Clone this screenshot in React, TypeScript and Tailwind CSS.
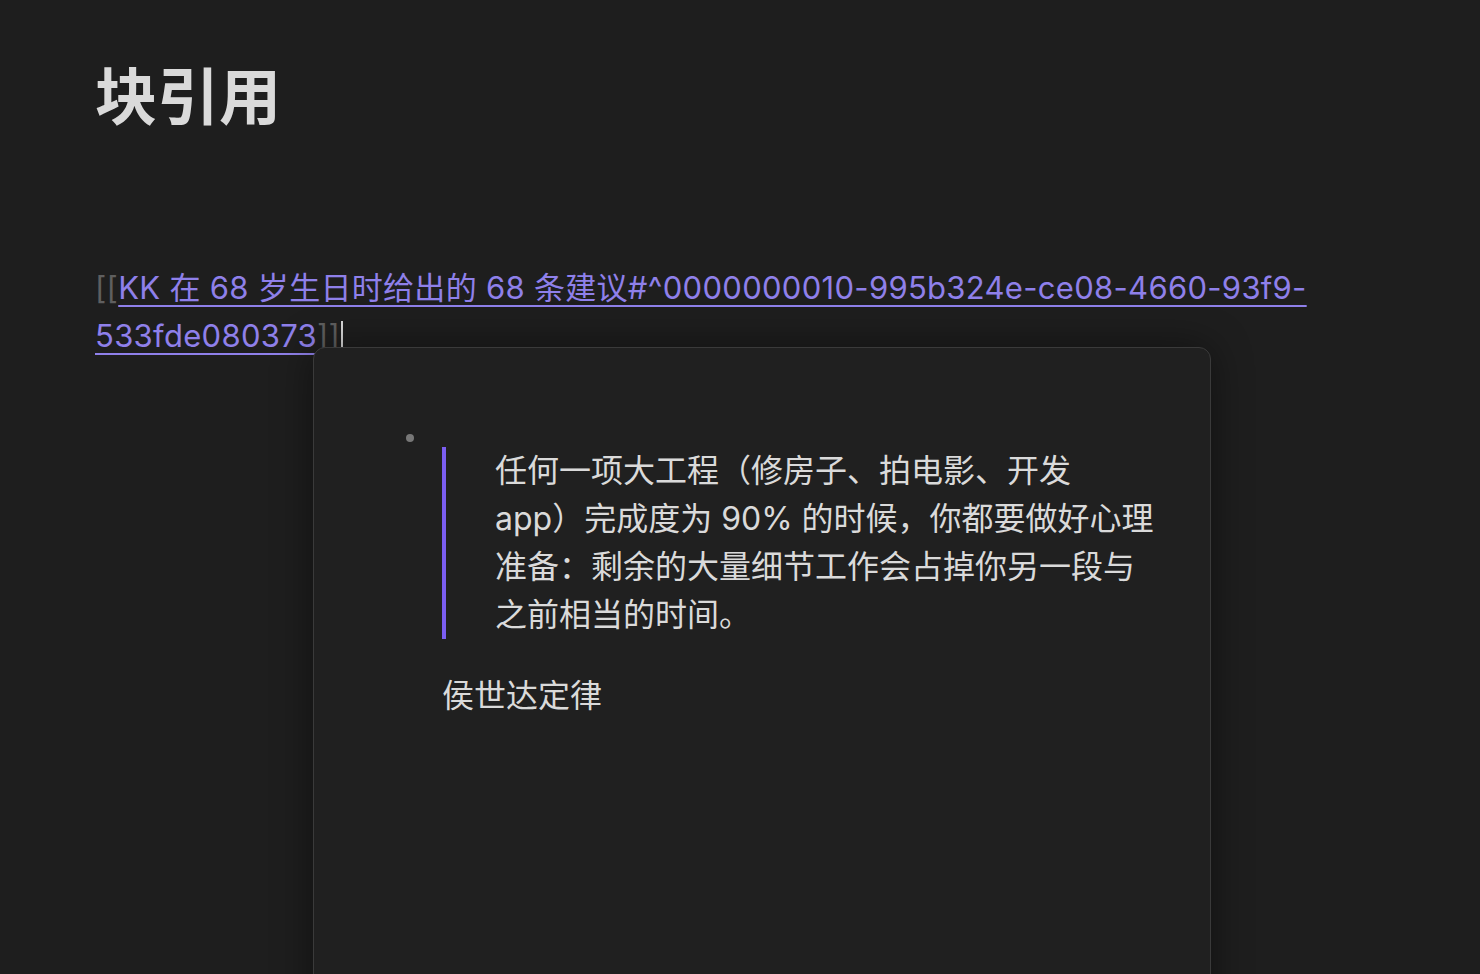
import React from "react";

export default function App() {
  const font = { fontFamily: 'Inter, "Noto Sans CJK SC", sans-serif' };
  return (
    <div className="relative w-[1480px] h-[974px] overflow-hidden bg-[#1e1e1e]" style={font}>
      <div className="pl-[95px] pt-[61px]">
        <h1 className="text-[62px] leading-[74px] font-bold text-[#dadada]">块引用</h1>
        <p className="mt-[129px] text-[31px] leading-[48px] tracking-[0.3px] text-[#8f80ea] pr-[150px]">
          <span className="text-[#5f5f5f]">[[</span>
          <span className="underline decoration-[2px] underline-offset-[6px]">
            KK 在 68 岁生日时给出的 68 条建议#^0000000010-995b324e-ce08-4660-93f9-533fde080373
          </span>
          <span className="text-[#5f5f5f]">]]</span>
          <span className="inline-block align-middle w-[2px] h-[30px] bg-[#dadada] ml-[1px] -mt-[6px]" />
        </p>
      </div>

      <div className="absolute left-[313px] top-[347px] w-[898px] h-[700px] rounded-[12px] border border-[#3a3a3a] bg-[#202020] shadow-[0_0_40px_rgba(0,0,0,0.45)]">
        <div className="flex pl-[93px]">
          <div className="w-[35px] shrink-0">
            <div className="mt-[86px] ml-[-1px] w-[8px] h-[8px] rounded-full bg-[#777777]" />
          </div>
          <div>
            <div className="mt-[99px] border-l-4 border-[#7b5ef2] pl-[49px] text-[32px] leading-[48px] text-[#dadada]">
              任何一项大工程（修房子、拍电影、开发<br />
              app）完成度为 90% 的时候，你都要做好心理<br />
              准备：剩余的大量细节工作会占掉你另一段与<br />
              之前相当的时间。
            </div>
            <div className="mt-[33px] text-[32px] leading-[48px] text-[#dadada]">侯世达定律</div>
          </div>
        </div>
      </div>
    </div>
  );
}
